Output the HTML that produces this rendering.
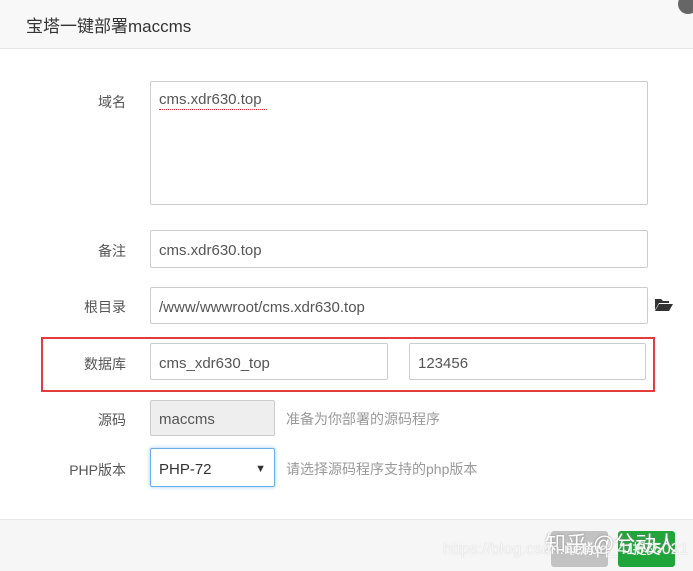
<!DOCTYPE html><html><head><meta charset="utf-8"><style>
body{margin:0;width:693px;height:570px;position:relative;background:#fff;font-family:"Liberation Sans","Noto Sans CJK SC",sans-serif;color:#333;overflow:hidden}
.a{position:absolute}
.hd{left:0;top:0;width:693px;height:48px;background:#f8f8f8;border-bottom:1px solid #e5e5e5}
.lb{width:126px;text-align:right;font-size:14px;color:#555}
.in{border:1px solid #ccc;border-radius:2px;box-sizing:border-box;font-size:15px;padding:2px 8px 0;color:#555}
.tip{font-size:14px;color:#999}
</style></head><body>
<div class="a hd"></div>
<div class="a" style="left:26px;top:12px;font-size:17px;color:#333">宝塔一键部署maccms</div>
<div class="a" style="left:678px;top:-6px;width:20px;height:20px;border-radius:50%;background:#666"></div>
<div class="a lb" style="top:92px">域名</div>
<div class="a in" style="left:150px;top:81px;width:498px;height:124px;padding-top:9px">cms.xdr630.top</div>
<div class="a" style="left:159px;top:109px;width:108px;border-bottom:1px dotted #e33"></div>
<div class="a lb" style="top:241px">备注</div>
<div class="a in" style="left:150px;top:230px;width:498px;height:38px;line-height:36px">cms.xdr630.top</div>
<div class="a lb" style="top:297px">根目录</div>
<div class="a in" style="left:150px;top:287px;width:498px;height:37px;line-height:35px">/www/wwwroot/cms.xdr630.top</div>
<svg class="a" style="left:654px;top:297px" width="20" height="14" viewBox="0 0 20 14"><path d="M1 2h6l2 2h6v2H5L1 13z" fill="#333"/><path d="M5 7h14l-4 7H1z" fill="#333"/></svg>
<div class="a" style="left:41px;top:337px;width:610px;height:51px;border:2px solid #e33c3c"></div>
<div class="a lb" style="top:354px">数据库</div>
<div class="a in" style="left:150px;top:343px;width:238px;height:37px;line-height:35px">cms_xdr630_top</div>
<div class="a in" style="left:409px;top:343px;width:237px;height:37px;line-height:35px">123456</div>
<div class="a lb" style="top:410px">源码</div>
<div class="a in" style="left:150px;top:400px;width:125px;height:36px;line-height:34px;background:#eee">maccms</div>
<div class="a tip" style="left:286px;top:409px">准备为你部署的源码程序</div>
<div class="a lb" style="top:460px">PHP版本</div>
<div class="a in" style="left:150px;top:448px;width:125px;height:39px;line-height:37px;border-color:#66afe9;box-shadow:0 0 4px rgba(102,175,233,.6);color:#333">PHP-72<span style="position:absolute;right:8px;font-size:11px">▼</span></div>
<div class="a tip" style="left:286px;top:459px">请选择源码程序支持的php版本</div>
<div class="a" style="left:0;top:519px;width:693px;height:51px;background:#f6f6f6;border-top:1px solid #e8e8e8"></div>
<div class="a" style="left:551px;top:531px;width:57px;height:36px;background:#c2c2c2;border-radius:3px;color:#fff;font-size:14px;text-align:center;line-height:36px">取消</div>
<div class="a" style="left:618px;top:531px;width:57px;height:36px;background:#20a53a;border-radius:3px;color:#fff;font-size:14px;text-align:center;line-height:36px">提交</div>
<div class="a" style="left:545px;top:528px;font-size:21px;color:#fff;text-shadow:0 0 2px #888">知乎 @兮动人</div>
<div class="a" style="left:443px;top:541px;font-size:16px;color:rgba(255,255,255,.85);text-shadow:0 0 1px #bbb">https://blog.csdn.net/qq_41675021</div>
</body></html>
